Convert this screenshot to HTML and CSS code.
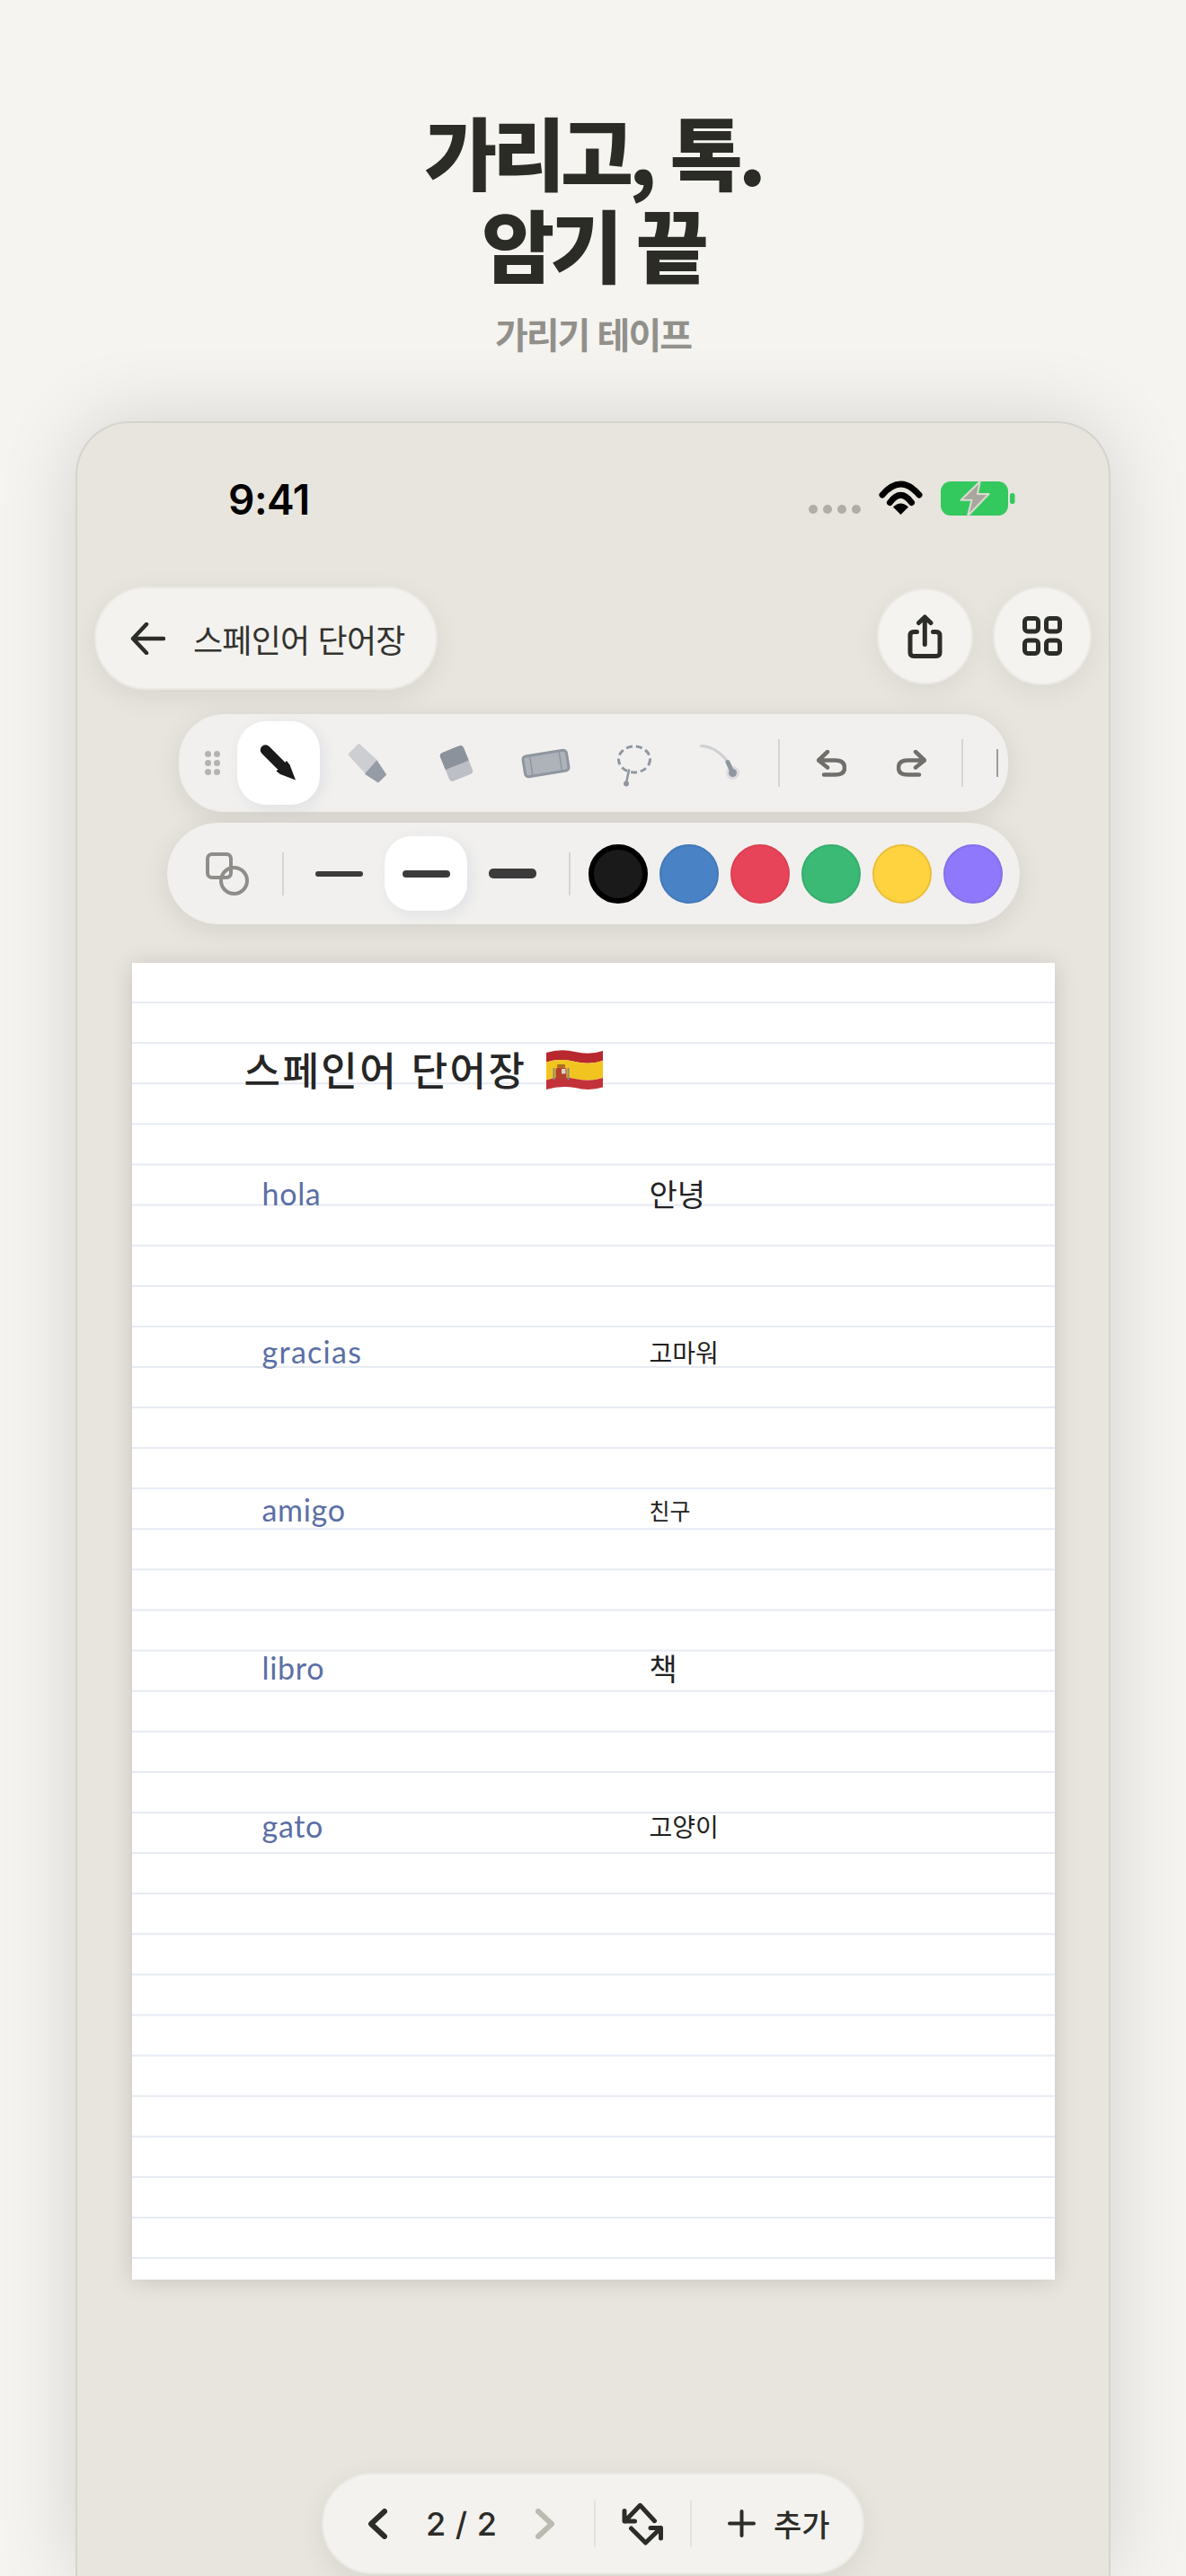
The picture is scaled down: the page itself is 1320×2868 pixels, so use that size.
FILE: index.html
```html
<!DOCTYPE html>
<html lang="ko">
<head>
<meta charset="utf-8">
<title>가리고, 톡. 암기 끝</title>
<link rel="stylesheet" href="styles.css">
</head>
<body>
<header class="hero">
  <h1 class="hero-title">가리고, 톡.<br>암기 끝</h1>
  <p class="hero-sub">가리기 테이프</p>
</header>
<main class="phone">
  <div class="status">
    <span class="time">9:41</span>
    <div class="status-icons">
      <span class="signal"><i></i><i></i><i></i><i></i></span>
      <svg class="wifi" viewBox="979 535 49 38"><path d="M983 551Q1003.5 527 1024 551" class="wifi-arc"/><path d="M991.5 559.5Q1003.5 543 1015.5 559.5" class="wifi-arc"/><path d="M1003.5 573L995 564.5Q1003.5 556.5 1012 564.5Z"/></svg>
      <svg class="battery" viewBox="1048 534 83 42"><rect x="1048" y="536" width="75" height="38" rx="11" fill="#34c95f"/><rect x="1125" y="549" width="5.5" height="12" rx="2.5" fill="#34c95f"/><path d="M1091.7 536L1070.5 556.7H1082.5L1078 574.5L1101.5 550H1089Z" fill="#a8a69f" stroke="#dcdccf" stroke-width="2" stroke-linejoin="round"/></svg>
    </div>
  </div>

  <div class="topbar">
    <div class="back-pill">
      <svg class="back-arrow" viewBox="143 692 39 36"><path d="M180 710H146M161 694L146 710L161 726"/></svg>
      <span class="back-label">스페인어 단어장</span>
    </div>
    <div class="top-actions">
      <div class="round-btn share">
        <svg class="share-icon" viewBox="1009 682 43 52"><path d="M1021.5 702.5H1018Q1014 702.5 1014 706.5V725.5Q1014 729.5 1018 729.5H1043Q1047 729.5 1047 725.5V706.5Q1047 702.5 1043 702.5H1039.5M1030.3 716.5V686M1023.5 692.5L1030.3 686L1037 692.5"/></svg>
      </div>
      <div class="round-btn grid">
        <svg class="grid-icon" viewBox="1136 684 48 48"><rect x="1140.5" y="688.5" width="15" height="14.5" rx="3.5"/><rect x="1164.5" y="688.5" width="15" height="14.5" rx="3.5"/><rect x="1140.5" y="713" width="15" height="14.5" rx="3.5"/><rect x="1164.5" y="713" width="15" height="14.5" rx="3.5"/></svg>
      </div>
    </div>
  </div>

  <div class="toolbar tools">
    <span class="grip"><i></i><i></i><i></i><i></i><i></i><i></i></span>
    <div class="tool active">
      <svg class="tool-icon" viewBox="281 821.5 56 56"><path d="M294.5 834.5L311 851" stroke="#1a1a1a" stroke-width="11.5" stroke-linecap="round"/><path d="M306.5 858L318 846.5L321.5 851L328 868L311 861.5Z" fill="#1a1a1a"/></svg>
    </div>
    <div class="tool">
      <svg class="tool-icon" viewBox="380 821.5 56 56"><path d="M398.5 829L388 839.5L406 859L418 847Z" fill="#cdced1" stroke="#cdced1" stroke-width="3" stroke-linejoin="round"/><path d="M406 861L418.3 847L428.3 862L420 870Z" fill="#969ca5" stroke="#969ca5" stroke-width="1.5" stroke-linejoin="round"/></svg>
    </div>
    <div class="tool">
      <svg class="tool-icon" viewBox="479 821.5 56 56"><g transform="rotate(-22 507 849.5)"><rect x="493" y="832.5" width="28" height="34" rx="4" fill="#bcbfc5"/><path d="M493 851.5V836.5Q493 832.5 497 832.5H517Q521 832.5 521 836.5V851.5Z" fill="#8b929c"/></g></svg>
    </div>
    <div class="tool">
      <svg class="tool-icon" viewBox="578 821.5 56 56"><g transform="rotate(-9 606.5 849.5)"><rect x="582" y="838" width="49" height="23" rx="3.5" fill="#aeb3ba" stroke="#8f96a0" stroke-width="3"/><path d="M590 838V861M623 838V861" stroke="#8f96a0" stroke-width="1.5"/></g></svg>
    </div>
    <div class="tool">
      <svg class="tool-icon" viewBox="677 821.5 56 56"><ellipse cx="705" cy="845" rx="17.5" ry="14.5" fill="none" stroke="#8f96a0" stroke-width="3" stroke-dasharray="7 4"/><path d="M699 857L696 871" stroke="#8f96a0" stroke-width="2.5" stroke-linecap="round"/><circle cx="696" cy="872" r="3" fill="#8f96a0"/></svg>
    </div>
    <div class="tool">
      <svg class="tool-icon" viewBox="776 821.5 56 56"><circle cx="814.5" cy="860" r="7.5" fill="#dcdddf"/><path d="M779.5 830Q797 831 810 849" fill="none" stroke="#ced0d3" stroke-width="3" stroke-linecap="round"/><path d="M809 848L814.5 860" stroke="#8f96a0" stroke-width="5" stroke-linecap="round"/><circle cx="814.5" cy="860" r="4.5" fill="#8f96a0"/></svg>
    </div>
    <span class="vline tall first-split"></span>
    <svg class="history undo" viewBox="908 835 33 30"><path d="M920 837L910 846.5L920 854.5M910 846.5H929Q939 846.5 939 855Q939 862.5 929 862.5H916"/></svg>
    <svg class="history redo" viewBox="997 835 33 30"><path d="M1018 837L1028 846.5L1018 854.5M1028 846.5H1009Q999 846.5 999 855Q999 862.5 1009 862.5H1022"/></svg>
    <span class="vline tall second-split"></span>
    <span class="vline stub"></span>
  </div>

  <div class="toolbar pens">
    <svg class="shapes" viewBox="228 949 48 48"><rect x="230" y="951" width="26" height="26" rx="5"/><circle cx="259.5" cy="980.5" r="14.5"/></svg>
    <span class="vline short shape-split"></span>
    <div class="size"><span class="stroke s1"></span></div>
    <div class="size active"><span class="stroke s2"></span></div>
    <div class="size"><span class="stroke s3"></span></div>
    <span class="vline short color-split"></span>
    <div class="swatches">
      <span class="swatch black"></span>
      <span class="swatch blue"></span>
      <span class="swatch red"></span>
      <span class="swatch green"></span>
      <span class="swatch yellow"></span>
      <span class="swatch purple"></span>
    </div>
  </div>

  <section class="paper">
    <h2 class="note-title">
      <span>스페인어 단어장</span>
      <svg class="flag" viewBox="607 1167 63 47">
        <path d="M607 1172Q623 1167 639 1171Q655 1175 670 1170V1181Q655 1186 639 1182Q623 1178 607 1182.5Z" fill="#b8282f"/>
        <path d="M607 1182.5Q623 1178 639 1182Q655 1186 670 1181V1200Q655 1205 639 1201Q623 1197 607 1202.5Z" fill="#f2c41f"/>
        <path d="M607 1202.5Q623 1197 639 1201Q655 1205 670 1200V1210.5Q655 1215 639 1211Q623 1208 607 1213Z" fill="#c3323a"/>
        <rect x="619" y="1185" width="9" height="3.5" rx="1" fill="#a8701f"/>
        <rect x="617.5" y="1188.5" width="12" height="13" rx="3" fill="#b3412c"/>
        <rect x="624" y="1190" width="4.5" height="5.5" fill="#d9d2c4"/>
        <path d="M615.5 1189V1202M631.5 1189V1202" stroke="#8d8a80" stroke-width="2"/>
      </svg>
    </h2>
    <div class="vocab">
      <span class="es">hola</span><span class="ko big">안녕</span>
      <span class="es wide">gracias</span><span class="ko">고마워</span>
      <span class="es">amigo</span><span class="ko small">친구</span>
      <span class="es">libro</span><span class="ko big">책</span>
      <span class="es">gato</span><span class="ko">고양이</span>
    </div>
  </section>

  <nav class="pager">
    <svg class="chev prev" viewBox="408 2794 21 34"><path d="M426 2797L411 2811L426 2825"/></svg>
    <span class="page-num">2 / 2</span>
    <svg class="chev next" viewBox="594 2794 21 34"><path d="M597 2797L612 2811L597 2825"/></svg>
    <span class="vline pager-line one"></span>
    <svg class="swap" viewBox="689 2786 46 48"><path d="M725.5 2806.7L709.4 2789.3L692.5 2807M692 2795.5V2807H703.5M699.5 2815L715.5 2831L732.5 2814.5M721 2814.5H732.5V2826"/></svg>
    <span class="vline pager-line two"></span>
    <svg class="plus" viewBox="809 2797 27 27"><path d="M809 2810.5H836M822.5 2797V2824"/></svg>
    <span class="add-label">추가</span>
  </nav>
</main>
</body>
</html>
```

FILE: styles.css
```css
* { box-sizing: border-box; }
html, body { margin: 0; padding: 0; height: 2868px; overflow: hidden; }
body {
  background: #f5f4f0;
  font-family: "Noto Sans CJK KR", "Noto Sans", sans-serif;
  color: #2c2c28;
}
i { display: block; }
svg { display: block; flex: none; }

.hero { padding-top: 115px; text-align: center; height: 469px; }
.hero-title {
  margin: 0;
  font-size: 88px;
  line-height: 103px;
  font-weight: 900;
  letter-spacing: -5px;
  color: #2c2c27;
}
.hero-sub {
  margin: 24px 0 0;
  font-size: 40px;
  line-height: 52px;
  font-weight: 700;
  letter-spacing: -2px;
  color: #91908b;
}

.phone {
  height: 2399px;
  margin: 0 84px;
  padding-top: 65px;
  display: flex;
  flex-direction: column;
  background: #e8e5de;
  border: 2px solid #d5d3cd;
  border-bottom: 0;
  border-radius: 60px 60px 0 0;
  box-shadow: 0 0 90px rgba(0, 0, 0, .14);
}

.status {
  height: 40px;
  padding: 0 104px 0 168px;
  display: flex;
  align-items: center;
  justify-content: space-between;
}
.time { font-family: Inter, sans-serif; font-size: 46px; font-weight: 600; color: #000; line-height: 40px; letter-spacing: -.5px; }
.status-icons { display: flex; align-items: flex-start; }
.signal { display: flex; gap: 6px; margin-top: 26px; }
.signal i { width: 10px; height: 10px; border-radius: 50%; background: #b0ada7; }
.wifi { width: 49px; height: 38px; margin: -1px 0 0 20px; }
.wifi-arc { fill: none; stroke: #000; stroke-width: 7; stroke-linecap: round; }
.battery { width: 83px; height: 42px; margin: -2px 0 0 20px; }

.topbar {
  margin-top: 77px;
  height: 115px;
  padding: 0 19px;
  display: flex;
  align-items: flex-start;
  justify-content: space-between;
}
.back-pill {
  width: 382px;
  height: 115px;
  padding-left: 38px;
  display: flex;
  align-items: center;
  background: #f3f2ef;
  border: 2px solid #ebe9e4;
  border-radius: 58px;
  box-shadow: 0 8px 30px rgba(0, 0, 0, .07);
}
.back-arrow { width: 39px; height: 36px; fill: none; stroke: #2c2c28; stroke-width: 4.5; stroke-linecap: round; stroke-linejoin: round; }
.back-label { margin-left: 31px; font-size: 36px; line-height: 50px; letter-spacing: -.8px; color: #33332f; white-space: nowrap; }
.top-actions { display: flex; align-items: flex-start; gap: 22px; }
.round-btn {
  display: flex;
  align-items: center;
  justify-content: center;
  background: #f4f3f0;
  border: 2px solid #ebe9e4;
  border-radius: 50%;
  box-shadow: 0 8px 30px rgba(0, 0, 0, .06);
}
.share { width: 107px; height: 107px; margin-top: 2px; }
.grid { width: 110px; height: 110px; }
.share-icon { width: 43px; height: 52px; fill: none; stroke: #2c2c28; stroke-width: 5; stroke-linecap: round; stroke-linejoin: round; }
.grid-icon { width: 48px; height: 48px; fill: none; stroke: #2c2c28; stroke-width: 5; }

.toolbar {
  align-self: center;
  display: flex;
  align-items: center;
  background: #f1f0ee;
  border: 1px solid #f0efec;
  box-shadow: 0 6px 30px rgba(0, 0, 0, .09);
}
.tools {
  width: 923px;
  height: 109px;
  margin-top: 27px;
  padding-left: 28px;
  border-radius: 50px;
}
.grip { display: grid; grid-template-columns: 7px 7px; gap: 3px; width: 17px; margin-right: 19px; }
.grip i { width: 7px; height: 7px; border-radius: 50%; background: #b4b3b0; }
.tool {
  width: 92px;
  height: 93px;
  margin-right: 7px;
  display: flex;
  align-items: center;
  justify-content: center;
  border-radius: 32px;
}
.tool.active, .size.active { background: #fff; box-shadow: 4px 4px 14px rgba(170, 175, 200, .22); }
.tool-icon { width: 56px; height: 56px; }
.vline { display: block; flex: none; width: 2px; background: #d6d5d1; }
.tall { height: 53px; }
.first-split { margin-left: 8px; }
.history { width: 33px; height: 30px; fill: none; stroke: #706f6c; stroke-width: 4.5; stroke-linecap: round; stroke-linejoin: round; }
.undo { margin-left: 41px; }
.redo { margin-left: 56px; }
.second-split { margin-left: 39px; }
.stub { height: 31px; margin-left: 37px; background: #9d9c99; }

.pens {
  width: 949px;
  height: 113px;
  margin-top: 12px;
  padding-left: 42px;
  border-radius: 56px;
}
.shapes { width: 48px; height: 48px; fill: none; stroke: #8e8d8a; stroke-width: 4; }
.short { height: 48px; }
.shape-split { margin: 0 16px 0 37px; }
.size {
  width: 92px;
  height: 83px;
  margin-right: 4.5px;
  display: flex;
  align-items: center;
  justify-content: center;
  border-radius: 30px;
}
.stroke { display: block; width: 53px; background: #3b3b3b; border-radius: 5px; }
.s1 { height: 6px; }
.s2 { height: 8px; }
.s3 { height: 11px; }
.color-split { margin-left: 12px; }
.swatches { display: flex; gap: 13px; margin-left: 20px; }
.swatch { display: block; width: 66px; height: 66px; border-radius: 50%; border: 2px solid; }
.black { background: #1a1a1a; border: 6px solid #000; }
.blue { background: #4a82c6; border-color: #4279bb; }
.red { background: #e84459; border-color: #dc3f53; }
.green { background: #3bba75; border-color: #37ae6d; }
.yellow { background: #ffd23f; border-color: #eabf38; }
.purple { background: #8f78fb; border-color: #8570ea; }

.paper {
  align-self: center;
  width: 1027px;
  height: 1466px;
  margin-top: 43px;
  padding: 88px 0 0 125px;
  background-color: #fff;
  background-image: linear-gradient(to bottom, transparent 43.6px, #e6eaf2 43.6px, #e6eaf2 45.1px);
  background-size: 100% 45.1px;
  box-shadow: 0 2px 24px rgba(0, 0, 0, .14);
}
.note-title {
  margin: 0;
  height: 60px;
  display: flex;
  align-items: center;
  font-size: 44px;
  line-height: 60px;
  font-weight: 500;
  letter-spacing: 2.4px;
  color: #262626;
}
.flag { width: 63px; height: 47px; margin-left: 22px; }
.vocab {
  margin-top: 84px;
  padding-left: 20px;
  display: grid;
  grid-template-columns: 431px 1fr;
  grid-auto-rows: 176px;
}
.es { font-family: Lato, sans-serif; font-size: 34px; line-height: 50px; color: #5b6fa5; letter-spacing: .7px; }
.es.wide { letter-spacing: 1.3px; }
.ko { font-size: 28px; line-height: 50px; color: #222; }
.ko.big { font-size: 34px; }
.ko.small { font-size: 25px; }

.pager {
  align-self: center;
  width: 604px;
  height: 113px;
  margin-top: 215px;
  padding-left: 50px;
  display: flex;
  align-items: center;
  background: #f3f2ef;
  border: 2px solid #ebe9e4;
  border-radius: 57px;
  box-shadow: 0 8px 30px rgba(0, 0, 0, .07);
}
.chev { width: 21px; height: 34px; fill: none; stroke-width: 6; stroke-linecap: round; stroke-linejoin: round; }
.prev { stroke: #2c2c28; }
.next { stroke: #bcb9b1; margin-left: 43px; }
.page-num { margin-left: 43px; width: 79px; font-family: Inter, sans-serif; font-size: 36px; font-weight: 500; letter-spacing: .5px; white-space: nowrap; line-height: 44px; color: #2c2c28; }
.pager-line { height: 52px; background: #e5e2db; }
.one { margin-left: 44px; }
.swap { width: 46px; height: 48px; margin-left: 29px; fill: none; stroke: #2c2c28; stroke-width: 5; stroke-linecap: round; stroke-linejoin: round; }
.two { margin-left: 30px; }
.plus { width: 27px; height: 27px; margin-left: 42px; overflow: visible; fill: none; stroke: #2c2c28; stroke-width: 4; stroke-linecap: round; }
.add-label { margin-left: 22px; font-size: 34px; line-height: 44px; font-weight: 500; color: #2c2c28; white-space: nowrap; }
```
